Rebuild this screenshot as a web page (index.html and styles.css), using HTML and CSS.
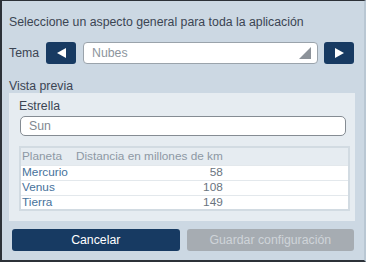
FILE: index.html
```html
<!DOCTYPE html>
<html lang="es">

<head>
    <meta charset="UTF-8">
    <meta name="viewport" content="width=device-width, initial-scale=1.0">
    <title>Aspecto</title>
    <link rel="stylesheet" href="styles.css">
</head>

<body>
    <div class="dialog">
        <p class="intro">Seleccione un aspecto general para toda la aplicación</p>
        <div class="theme-row">
            <span class="label">Tema</span>
            <button class="nav"><svg width="9" height="10" viewBox="0 0 9 10"><path d="M0 5 L9 0 L9 10 Z" fill="#fff"/></svg></button>
            <div class="select">
                <span>Nubes</span>
                <svg class="corner" width="12" height="12" viewBox="0 0 12 12"><path d="M12 0 L12 12 L0 12 Z" fill="#8c9299"/></svg>
            </div>
            <button class="nav"><svg width="9" height="10" viewBox="0 0 9 10"><path d="M9 5 L0 0 L0 10 Z" fill="#fff"/></svg></button>
        </div>
        <div class="preview-title">Vista previa</div>
        <div class="preview">
            <div class="field-label">Estrella</div>
            <div class="input">Sun</div>
            <table class="planets">
                <thead>
                    <tr>
                        <th>Planeta</th>
                        <th>Distancia en millones de km</th>
                        <th class="fill"></th>
                    </tr>
                </thead>
                <tbody>
                    <tr><td class="name">Mercurio</td><td class="num">58</td><td></td></tr>
                    <tr><td class="name">Venus</td><td class="num">108</td><td></td></tr>
                    <tr><td class="name">Tierra</td><td class="num">149</td><td></td></tr>
                </tbody>
            </table>
        </div>
        <div class="actions">
            <button class="btn primary">Cancelar</button>
            <button class="btn disabled">Guardar configuración</button>
        </div>
    </div>
</body>

</html>
```

FILE: styles.css
```css
* {
    margin: 0;
    padding: 0;
    box-sizing: border-box;
}

body {
    width: 366px;
    height: 262px;
    overflow: hidden;
    font-family: "Liberation Sans", Arial, sans-serif;
    font-size: 12.3px;
    color: #3b4553;
    background-color: #ccd8e3;
}

.dialog {
    width: 366px;
    height: 262px;
    border-top: 1px solid #2c3138;
    border-left: 2px solid #2c3138;
    border-bottom: 2px solid #2c3138;
    border-right: 2px solid #b9c7d3;
    padding: 13px 10px 0 7px;
}

.intro {
    line-height: 16px;
    height: 16px;
}

.theme-row {
    display: flex;
    align-items: center;
    margin-top: 12px;
    height: 22px;
}

.theme-row .label {
    width: 37px;
}

.nav {
    width: 30px;
    height: 22px;
    border: none;
    border-radius: 3px;
    background-color: #173a62;
    display: flex;
    align-items: center;
    justify-content: center;
}

.select {
    position: relative;
    flex: 1;
    height: 22px;
    margin: 0 6px 0 7px;
    background-color: #fff;
    border: 1px solid #9aa3ab;
    border-radius: 4px;
    padding-left: 8px;
    line-height: 20px;
    color: #8d959d;
}

.select .corner {
    position: absolute;
    right: 6px;
    bottom: 4px;
}

.preview-title {
    margin-top: 15px;
    line-height: 14px;
    height: 14px;
}

.preview {
    background-color: #e6ecf1;
    margin-right: -1px;
    height: 128px;
    padding: 6px 8px 0 10px;
}

.field-label {
    line-height: 15px;
}

.input {
    height: 20px;
    margin: 2px 1px 0 1px;
    background-color: #fff;
    border: 1px solid #858c93;
    border-radius: 5px;
    padding-left: 8px;
    line-height: 18px;
    color: #7f8891;
}

.planets {
    width: 331px;
    margin-top: 10px;
    border-collapse: collapse;
    border: 2px solid #d2dbe2;
    font-size: 11.8px;
}

.planets th {
    background-color: #e6ecf1;
    color: #8d98a4;
    font-weight: normal;
    text-align: left;
    height: 18px;
    padding: 0 0 0 1px;
    white-space: nowrap;
}

.planets th + th {
    padding-left: 8px;
}

.planets th.fill {
    width: 100%;
}

.planets td {
    background-color: #fff;
    height: 15px;
    line-height: 13px;
    padding: 0 0 0 1px;
    border-top: 1px solid #e3e8ec;
}

.planets td.name {
    color: #46719b;
}

.planets td.num {
    text-align: right;
    color: #6a7480;
    padding-right: 0;
}

.actions {
    display: flex;
    gap: 7px;
    margin-top: 8px;
    padding-left: 3px;
}

.btn {
    flex: 1;
    height: 22px;
    border: none;
    border-radius: 3px;
    font-family: "Liberation Sans", Arial, sans-serif;
    font-size: 12.3px;
}

.btn.primary {
    background-color: #173a62;
    color: #fff;
}

.btn.disabled {
    background-color: #a6acb2;
    color: #cfd4d9;
}
```
